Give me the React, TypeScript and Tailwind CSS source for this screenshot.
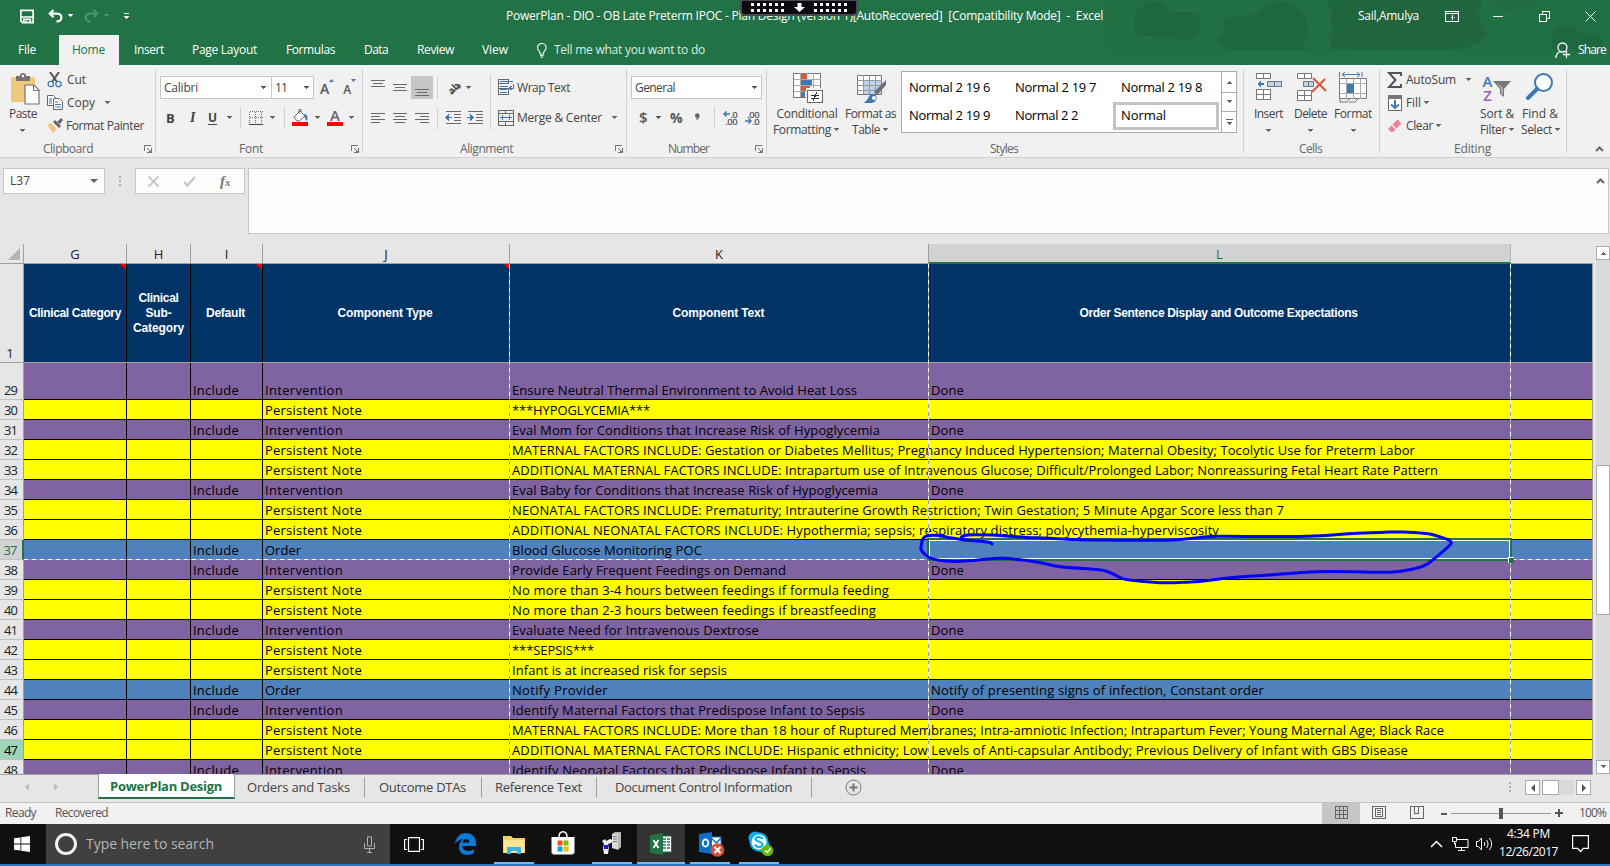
import { useLayoutEffect, useRef, useState } from "react";
import type { ReactNode } from "react";

/* Text set to an exact advance width through letter spacing. */
function Fit({ w, t, className = "" }: { w: number; t: string; className?: string }) {
  const ref = useRef<HTMLSpanElement>(null);
  const [ls, setLs] = useState(0);
  useLayoutEffect(() => {
    const el = ref.current;
    if (el) setLs((w - el.getBoundingClientRect().width) / t.length);
  }, [w, t]);
  return (
    <span className={"block shrink-0 whitespace-pre " + className} style={{ width: w, letterSpacing: ls }}>
      <span ref={ref}>{t}</span>
    </span>
  );
}

function Caret({ className = "" }: { className?: string }) {
  return (
    <svg className={"h-[4px] w-[7px] shrink-0 " + className} viewBox="0 0 7 4" fill="currentColor" shapeRendering="crispEdges">
      <path d="M1 0h5v1H1zM2 1h3v1H2zM3 2h1v1H3z" />
    </svg>
  );
}

function VLine({ className = "" }: { className?: string }) {
  return <span className={"block w-px shrink-0 bg-[#d0d0d0] " + className} />;
}

function Launcher({ className = "" }: { className?: string }) {
  return (
    <svg className={"h-[8px] w-[8px] shrink-0 " + className} viewBox="0 0 8 8" fill="none" stroke="#777" shapeRendering="crispEdges">
      <path d="M.5 6V.5H7M3 3l3 3M7.5 3v4.5H3M5 6.5h2" />
    </svg>
  );
}

function Group({ className, label, labelClass, w, launcher, children }: {
  className: string; label: string; labelClass: string; w: number; launcher?: string; children: ReactNode;
}) {
  return (
    <section className={"mt-1 flex h-[84px] shrink-0 flex-col border-r border-[#d0d0d0] " + className}>
      <div className="flex h-[75px]">{children}</div>
      <div className="flex h-[9px] items-center text-[#666]">
        <Fit w={w} t={label} className={labelClass} />
        {launcher && <Launcher className={launcher} />}
      </div>
    </section>
  );
}

function Lines({ rows, className = "" }: { rows: [number, number, number][]; className?: string }) {
  return (
    <svg className={"h-[16px] w-[16px] shrink-0 " + className} viewBox="0 0 16 16" fill="#6a6a6a" shapeRendering="crispEdges">
      {rows.map(([x, y, w]) => <rect key={y} x={x} y={y} width={w} height="1" />)}
    </svg>
  );
}

function TitleBar() {
  return (
    <div className="relative flex h-[32px] items-center">
      <svg className="ml-[20px] h-[15px] w-[14px] shrink-0" viewBox="0 0 15 15" fill="none" stroke="#fff" strokeWidth="1.8">
        <path d="M.9.9h13.200v13.200H2.8L.9 12.200zM.8 8h13.400" /><path d="M4 14V10.500h7V14" /><path d="M5.500 13h2" />
      </svg>
      <svg className="ml-[14px] h-[14px] w-[15px] shrink-0" viewBox="0 0 15 14" fill="none" stroke="#fff" strokeWidth="2.200">
        <path d="M5.500 1 1.800 4.600 5.500 8.200" /><path d="M2 4.600h7.200c5.600 0 5.600 7.800 0 7.800H8.500" />
      </svg>
      <Caret className="ml-[4px] text-white" />
      <svg className="ml-[10px] h-[14px] w-[15px] shrink-0" viewBox="0 0 15 14" fill="none" stroke="#4f9570" strokeWidth="2">
        <path d="M9.500 1l3.700 3.600-3.700 3.600" /><path d="M13 4.600H5.800c-5.600 0-5.600 7.800 0 7.800h.7" />
      </svg>
      <Caret className="ml-[4px] text-[#4f9570]" />
      <svg className="ml-[13px] h-[8px] w-[7px] shrink-0" viewBox="0 0 7 8" fill="#fff" shapeRendering="crispEdges">
        <path d="M1 1h5v1H1zM1 4h5v1H1zM2 5h3v1H2zM3 6h1v1H3z" />
      </svg>
      <Fit w={597} t="PowerPlan - DIO - OB Late Preterm IPOC - Plan Design (version 1)[AutoRecovered]  [Compatibility Mode]  -  Excel" className="ml-[376px]" />
      <Fit w={61} t="Sail,Amulya" className="ml-[255px]" />
      <svg className="ml-[26px] h-[11px] w-[14px] shrink-0" viewBox="0 0 14 11" fill="none" stroke="#fff" shapeRendering="crispEdges">
        <path d="M.5.500h13v10H.5zM.5 2.500h13M7.500 4v5M5.500 6.500h1M8.500 6.500h1" />
      </svg>
      <span className="ml-[34px] block h-px w-[10px] bg-white" />
      <svg className="ml-[36px] h-[11px] w-[11px] shrink-0" viewBox="0 0 11 11" fill="none" stroke="#fff" shapeRendering="crispEdges">
        <path d="M.5 3.500h7v7h-7zM3.500 3V.500h7v7H8" />
      </svg>
      <svg className="ml-[35px] h-[11px] w-[11px] shrink-0" viewBox="0 0 11 11" fill="none" stroke="#fff"><path d="M.5.500l10 10M10.500.500l-10 10" /></svg>
      <div className="absolute -top-px left-[740px] flex h-[17px] w-[118px] items-center justify-between rounded-b-[5px] border-2 border-[#4a4852] bg-[#0a0a10] px-[9px]">
        <Dots />
        <svg className="h-[9px] w-[11px]" viewBox="0 0 11 9" fill="#fff"><path d="M3.500 0h4v4H11L5.500 9 0 4h3.500z" /></svg>
        <Dots />
      </div>
    </div>
  );
}

function Dots() {
  return (
    <span className="grid grid-cols-6 gap-[3px]">
      {Array.from({ length: 12 }, (_, i) => <i key={i} className="block h-[3px] w-[3px] bg-white" />)}
    </span>
  );
}

function TabBar() {
  return (
    <div className="relative flex h-[33px] items-end">
      <div className="flex h-[30px] items-center">
        <Fit w={18} t="File" className="ml-[18px]" />
        <div className="ml-[23px] flex h-[30px] w-[60px] items-center bg-[#f1f1f1] pl-[13px] text-[#217346]"><Fit w={33} t="Home" /></div>
        <Fit w={30} t="Insert" className="ml-[15px]" />
        <Fit w={65} t="Page Layout" className="ml-[28px]" />
        <Fit w={49} t="Formulas" className="ml-[29px]" />
        <Fit w={24} t="Data" className="ml-[29px]" />
        <Fit w={37} t="Review" className="ml-[29px]" />
        <Fit w={26} t="View" className="ml-[28px]" />
        <svg className="ml-[28px] h-[15px] w-[12px] shrink-0" viewBox="0 0 12 15" fill="none" stroke="#e4f0e9" strokeWidth="1.200">
          <path d="M4 11V9.500C3.500 8 1.500 7 1.500 4.800a4.300 4.300 0 0 1 8.600 0C10.100 7 8.100 8 7.600 9.500V11zM4 12.500h3.600M4.500 14.200h2.600" />
        </svg>
        <Fit w={151} t="Tell me what you want to do" className="ml-[6px] text-[#dcebe3]" />
        <svg className="ml-[850px] h-[17px] w-[16px] shrink-0" viewBox="0 0 16 17" fill="none" stroke="#fff" strokeWidth="1.300">
          <circle cx="7.500" cy="5.500" r="4.500" /><path d="M1 16c0-3 1.500-5.500 4.500-6.500M8 12.500h7M11.500 9v7" />
        </svg>
        <Fit w={28} t="Share" className="ml-[7px]" />
      </div>
    </div>
  );
}

function ClipboardGroup() {
  return (
    <Group className="w-[156px]" label="Clipboard" w={50} labelClass="ml-[43px]" launcher="ml-[51px]">
      <div className="flex w-[47px] shrink-0 flex-col">
        <svg className="ml-[10px] mt-[4px] h-[32px] w-[30px]" viewBox="0 0 30 32">
          <path d="M1 6a2 2 0 0 1 2-2h20a2 2 0 0 1 2 2v23H1z" fill="#edc87e" />
          <path d="M6 3h4a3 3 0 0 1 6 0h4v5H6z" fill="#737373" /><circle cx="13" cy="3" r="1.200" fill="#fff" />
          <path d="M15 12h9l5 5v14H15z" fill="#fff" stroke="#737373" strokeWidth="1.200" /><path d="M23.500 12v5.500H29" fill="none" stroke="#737373" />
        </svg>
        <Fit w={28} t="Paste" className="ml-[9px] mt-px" />
        <Caret className="ml-[19px] mt-[7px] text-[#666]" />
      </div>
      <div className="-mt-px flex flex-col">
        <div className="flex h-[23px] items-center">
          <svg className="h-[16px] w-[16px]" viewBox="0 0 16 16" fill="none">
            <path d="M3 0l7 10M12 0L5 10" stroke="#555" strokeWidth="2" />
            <circle cx="3.800" cy="12" r="2.700" stroke="#3f78b3" strokeWidth="1.300" /><circle cx="11.500" cy="12" r="2.700" stroke="#3f78b3" strokeWidth="1.300" />
          </svg>
          <Fit w={19} t="Cut" className="ml-[4px]" />
        </div>
        <div className="flex h-[23px] items-center">
          <svg className="h-[15px] w-[16px]" viewBox="0 0 16 15" fill="#fff" stroke="#666">
            <path d="M.5.500h6l2 2v8h-8z" /><path d="M6.500 3.500h6l3 3v8h-9z" />
            <path d="M2 4h3M2 6h3M2 8h3M8 7h3M8 9.500h6M8 12h6" stroke="#3f78b3" />
          </svg>
          <Fit w={28} t="Copy" className="ml-[4px]" />
          <Caret className="ml-[9px] text-[#666]" />
        </div>
        <div className="flex h-[23px] items-center">
          <svg className="h-[15px] w-[16px]" viewBox="0 0 16 15">
            <path d="M0 7l4-2 6 6-4 4z" fill="#edc87e" /><path d="M6 4l2-2 6 6-2 2z" fill="#666" /><path d="M10 4l4-4 2 2-3 4z" fill="#666" />
          </svg>
          <Fit w={78} t="Format Painter" className="ml-[3px]" />
        </div>
      </div>
    </Group>
  );
}

function FontGroup() {
  return (
    <Group className="w-[207px]" label="Font" w={24} labelClass="ml-[83px]" launcher="ml-[88px]">
      <div className="flex flex-col pl-[4px] pt-[7px]">
        <div className="flex h-[23px] items-center">
          <div className="flex h-[23px] w-[112px] items-center border border-[#c6c6c6] bg-white pl-[3px]">
            <Fit w={34} t="Calibri" /><Caret className="ml-[62px] text-[#555]" />
          </div>
          <div className="-ml-px flex h-[23px] w-[43px] items-center border border-[#c6c6c6] bg-white pl-[3px]">
            <Fit w={12} t="11" /><Caret className="ml-[16px] text-[#555]" />
          </div>
          <span className="ml-[6px] mt-[2px] text-[14px] leading-none font-semibold text-[#555]">A</span>
          <svg className="-mt-[14px] h-[3px] w-[5px]" viewBox="0 0 5 3" fill="#3f78b3"><path d="M0 3L2.500 0 5 3z" /></svg>
          <span className="ml-[9px] mt-[4px] text-[12px] leading-none font-semibold text-[#555]">A</span>
          <svg className="-mt-[14px] h-[3px] w-[5px]" viewBox="0 0 5 3" fill="#3f78b3"><path d="M0 0h5L2.500 3z" /></svg>
        </div>
        <div className="mt-[7px] flex h-[23px] items-center text-[#444]">
          <b className="ml-[6px] w-[9px] text-[13px]">B</b>
          <i className="ml-[15px] w-[8px] font-['Liberation_Serif'] text-[14px] font-bold">I</i>
          <u className="ml-[10px] w-[11px] text-[12px] font-bold underline-offset-2">U</u>
          <Caret className="ml-[7px] text-[#666]" />
          <VLine className="ml-[7px] h-[22px]" />
          <svg className="ml-[8px] h-[14px] w-[14px]" viewBox="0 0 14 14" fill="none" stroke="#777" shapeRendering="crispEdges">
            <path d="M.5.500h13M.5 6.500h13M.5.500v12M6.500.500v12M12.500.500v12" strokeDasharray="1 1" /><path d="M0 13.500h14" stroke="#444" />
          </svg>
          <Caret className="ml-[6px] text-[#666]" />
          <VLine className="ml-[8px] h-[22px]" />
          <svg className="ml-[7px] h-[17px] w-[16px]" viewBox="0 0 16 17">
            <path d="M2 8l6-6 5 5-6 5H5z" fill="#fff" stroke="#666" /><path d="M7 5V0h2v3" fill="none" stroke="#666" />
            <path d="M12 5c4 0 4 4 3 7-2-1-2-4-3-7z" fill="#3f78b3" /><path d="M0 13h16v4H0z" fill="red" />
          </svg>
          <Caret className="ml-[6px] text-[#666]" />
          <span className="ml-[6px] flex w-[16px] flex-col items-center">
            <span className="text-[15px] leading-[13px] font-semibold text-[#666]">A</span><span className="h-[4px] w-[16px] bg-[#ff0000]" />
          </span>
          <Caret className="ml-[5px] text-[#666]" />
        </div>
      </div>
    </Group>
  );
}

function AlignmentGroup() {
  return (
    <Group className="w-[264px]" label="Alignment" w={53} labelClass="ml-[97px]" launcher="ml-[102px]">
      <div className="flex flex-col pt-[7px]">
        <div className="flex h-[23px] items-center">
          <Lines className="ml-[7px]" rows={[[1, 0, 14], [3, 3, 10], [1, 6, 14]]} />
          <Lines className="ml-[6px]" rows={[[1, 4, 14], [3, 7, 10], [1, 10, 14]]} />
          <span className="ml-[3px] flex h-[23px] w-[22px] items-center bg-[#c6c6c6] pl-[3px]"><Lines rows={[[1, 9, 14], [3, 12, 10], [1, 15, 14]]} /></span>
          <VLine className="ml-[4px] h-[22px]" />
          <span className="ml-[7px] flex h-[16px] w-[16px] items-center justify-center">
            <span className="-rotate-45 text-[10px] leading-none font-bold text-[#555]">ab</span>
          </span>
          <svg className="-ml-[11px] mt-[3px] h-[11px] w-[11px]" viewBox="0 0 11 11" fill="none" stroke="#555" strokeWidth="1.300"><path d="M1 10L10 1M10 1H6.500M10 1v3.500" /></svg>
          <Caret className="ml-[4px] text-[#666]" />
        </div>
        <div className="mt-[8px] flex h-[23px] items-center">
          <Lines className="ml-[7px]" rows={[[1, 2, 14], [1, 5, 9], [1, 8, 14], [1, 11, 9]]} />
          <Lines className="ml-[6px]" rows={[[1, 2, 14], [3, 5, 10], [1, 8, 14], [3, 11, 10]]} />
          <Lines className="ml-[6px]" rows={[[1, 2, 14], [6, 5, 9], [1, 8, 14], [6, 11, 9]]} />
          <VLine className="ml-[7px] h-[22px]" />
          <Indent className="-mt-px ml-[7px]" />
          <Indent className="-mt-px ml-[6px]" right />
        </div>
      </div>
      <VLine className="ml-[7px] mt-[6px] h-[55px]" />
      <div className="flex flex-col pl-[7px] pt-[7px]">
        <div className="flex h-[23px] items-center">
          <svg className="-mt-[2px] h-[16px] w-[17px]" viewBox="0 0 17 16" fill="none" shapeRendering="crispEdges">
            <path d="M.5.500h10v4H.5zM.5 9.500h10v6H.5zM.5 4v6" stroke="#666" />
            <path d="M2 2.500h13M2 7.500h8M2 10.500h7M2 13.500h7" stroke="#3f78b3" />
            <path d="M15.500 5v4h-4M13.500 7l-2 2 2 2" stroke="#3f78b3" />
          </svg>
          <Fit w={53} t="Wrap Text" className="ml-[2px]" />
        </div>
        <div className="mt-[7px] flex h-[23px] items-center">
          <svg className="h-[16px] w-[16px]" viewBox="0 0 16 16" fill="none" shapeRendering="crispEdges">
            <path d="M.5.500h15v15H.5zM.5 3.500h15M.5 11.500h15M7.500 0v3M7.500 12v3" stroke="#666" />
            <path d="M2 7.500h12M4.500 5v5M11.500 5v5" stroke="#3f78b3" />
          </svg>
          <Fit w={85} t="Merge & Center" className="ml-[3px]" />
          <Caret className="ml-[9px] text-[#666]" />
        </div>
      </div>
    </Group>
  );
}

function Indent({ right = false, className = "" }: { right?: boolean; className?: string }) {
  return (
    <svg className={"h-[14px] w-[16px] shrink-0 " + className} viewBox="0 0 16 14" fill="none" shapeRendering="crispEdges">
      <path d="M1 .500h15M9 3.500h7M9 6.500h7M9 9.500h7M1 12.500h15" stroke="#6a6a6a" />
      {right ? <path d="M0 6h3V3l4 3.500L3 10V7H0z" fill="#3f78b3" /> : <path d="M7 6H4V3L0 6.500 4 10V7h3z" fill="#3f78b3" />}
    </svg>
  );
}

function Decimal({ top, bottom, right = false }: { top: string; bottom: string; right?: boolean }) {
  const arrow = (
    <svg className="h-[6px] w-[7px]" viewBox="0 0 7 6" fill="none" stroke="#3f78b3" strokeWidth="1.500">
      {right ? <path d="M0 3h6M3.500.5L6 3 3.500 5.500" /> : <path d="M7 3H1M3.500.5L1 3l2.500 2.500" />}
    </svg>
  );
  return (
    <span className="flex w-[15px] flex-col items-end text-[9.5px] leading-[7px] font-semibold tracking-[-0.6px]">
      <span className="flex h-[7px] items-center">{!right && arrow}{top}</span>
      <span className="flex h-[7px] items-center">{right && arrow}{bottom}</span>
    </span>
  );
}

function NumberGroup() {
  return (
    <Group className="w-[140px]" label="Number" w={41} labelClass="ml-[41px]" launcher="ml-[46px]">
      <div className="flex flex-col pl-[4px] pt-[7px]">
        <div className="flex h-[23px] w-[131px] items-center border border-[#c6c6c6] bg-white pl-[3px]">
          <Fit w={40} t="General" /><Caret className="ml-[76px] text-[#555]" />
        </div>
        <div className="mt-[7px] flex h-[23px] items-center text-[#555]">
          <span className="ml-[8px] w-[9px] text-[15px] leading-none font-semibold">$</span>
          <Caret className="ml-[7px]" />
          <span className="ml-[8px] w-[14px] text-[14px] leading-none font-bold">%</span>
          <svg className="-mt-[2px] ml-[10px] h-[8px] w-[7px]" viewBox="0 0 7 8" fill="#666"><path d="M1 2.500a2.300 2.300 0 0 1 4.600 0C5.600 5 4 7 1 7.600c1.200-.8 1.900-1.700 2-2.700C1.800 4.800 1 3.800 1 2.500z" /></svg>
          <VLine className="ml-[13px] h-[22px]" />
          <span className="ml-[7px] flex gap-[7px]"><Decimal top=".0" bottom=".00" /><Decimal top=".00" bottom=".0" right /></span>
        </div>
      </div>
    </Group>
  );
}

function StylesGroup() {
  return (
    <Group className="w-[477px]" label="Styles" w={28} labelClass="ml-[223px]">
      <div className="flex w-[72px] shrink-0 flex-col items-center">
        <svg className="ml-[10px] mt-[4px] h-[31px] w-[31px]" viewBox="0 0 31 31" shapeRendering="crispEdges">
          <path d="M.5.500h27v24H.5z" fill="#fff" stroke="#777" />
          <path d="M.5 6.500h27M.5 12.500h27M.5 18.500h27M7.500 0v24M13.500 0v24M20.500 0v24" stroke="#a9a9a9" />
          <path d="M8 1h6v5H8zM8 13h9v5H8z" fill="#d8593b" /><path d="M8 7h11v5H8zM8 19h4v5H8z" fill="#3f78b3" />
          <path d="M13 15h18v16H13z" fill="#f1f1f1" /><path d="M14.500 17.500h15v12h-15z" fill="#fff" stroke="#666" />
          <path d="M18 22.500h8M18 25.500h8M24 19l-4 9" stroke="#333" />
        </svg>
        <Fit w={61} t="Conditional" className="ml-[8px] mt-[2px]" />
        <div className="ml-[7px] flex items-center"><Fit w={58} t="Formatting" /><Caret className="ml-[2px] text-[#666]" /></div>
      </div>
      <div className="ml-[6px] flex w-[51px] shrink-0 flex-col items-center">
        <svg className="ml-[3px] mt-[6px] h-[29px] w-[30px]" viewBox="0 0 30 29">
          <path d="M.5.500h24v19H.5z" fill="#fff" stroke="#777" /><path d="M7 6h17v13H7z" fill="#bcd2ea" />
          <path d="M.5 5.500h24M.5 10.500h24M.5 15.500h24M6.500 0v19M12.500 0v19M18.500 0v19" stroke="#999" fill="none" />
          <path d="M29 5v5l-9 10-3-3z" fill="#6f6f6f" /><path d="M6 28c5-1 5-9 10-9s5 8-1 9z" fill="#3f78b3" /><circle cx="17" cy="23" r="2" fill="#fff" />
        </svg>
        <Fit w={51} t="Format as" className="mt-[2px]" />
        <div className="flex items-center"><Fit w={28} t="Table" /><Caret className="ml-[2px] text-[#666]" /></div>
      </div>
      <div className="ml-[5px] mt-[2px] flex h-[62px] w-[336px] border border-[#ababab] bg-white text-[13px] text-black">
        <div className="flex w-[319px] flex-col pt-px">
          <div className="flex h-[28px] items-center pl-[7px]">
            <Fit w={81} t="Normal 2 19 6" /><Fit w={81} t="Normal 2 19 7" className="ml-[25px]" /><Fit w={81} t="Normal 2 19 8" className="ml-[25px]" />
          </div>
          <div className="flex h-[28px] items-center pl-[7px]">
            <Fit w={81} t="Normal 2 19 9" /><Fit w={63} t="Normal 2 2" className="ml-[25px]" />
            <div className="ml-[35px] mt-[2px] flex h-[28px] w-[106px] items-center border-[3px] border-[#c3c3c3] pl-[5px]"><Fit w={45} t="Normal" className="-mt-[3px]" /></div>
          </div>
        </div>
        <div className="flex w-[15px] flex-col border-l border-[#ababab] text-[#666]">
          <span className="flex h-[20px] items-center justify-center"><Caret className="rotate-180" /></span>
          <span className="flex h-[20px] items-center justify-center border-y border-[#ababab]"><Caret /></span>
          <span className="flex h-[20px] flex-col items-center justify-center gap-[2px]"><span className="h-px w-[7px] bg-[#666]" /><Caret /></span>
        </div>
      </div>
    </Group>
  );
}

function CellsGroup() {
  return (
    <Group className="w-[136px]" label="Cells" w={23} labelClass="ml-[55px]">
      <div className="ml-[10px] flex w-[30px] shrink-0 flex-col">
        <svg className="ml-[2px] mt-[4px] h-[28px] w-[27px]" viewBox="0 0 27 28" fill="#fff" stroke="#777" shapeRendering="crispEdges">
          <path d="M.5.500h14v5H.5zM7.500 0v5M.5 16.500h14v10H.5zM7.500 16v10M.5 21.500h14" /><path d="M11.500 8.500h14v5h-14zM18.500 8v5" fill="#bcd2ea" />
          <path d="M8 10H5V7l-4 4 4 4v-3h3z" fill="#3f78b3" stroke="none" />
        </svg>
        <Fit w={29} t="Insert" className="mt-[5px]" /><Caret className="ml-[11px] mt-[7px] text-[#666]" />
      </div>
      <div className="ml-[10px] flex w-[34px] shrink-0 flex-col">
        <svg className="ml-[3px] mt-[4px] h-[28px] w-[30px]" viewBox="0 0 30 28" fill="#fff" stroke="#777">
          <path d="M.5.500h14v5H.5zM7.500 0v5M.5 17.500h14v10H.5zM7.500 17v10M.5 22.500h14" /><path d="M6.500 8.500h10v5h-10zM11.500 8v5" fill="#bcd2ea" />
          <path d="M16 5l13 13M28 6L15 19" stroke="#d8593b" strokeWidth="2.200" />
        </svg>
        <Fit w={33} t="Delete" className="mt-[5px]" /><Caret className="ml-[13px] mt-[7px] text-[#666]" />
      </div>
      <div className="ml-[6px] flex w-[38px] shrink-0 flex-col">
        <svg className="ml-[5px] mt-[3px] h-[31px] w-[29px]" viewBox="0 0 29 31" fill="#fff" stroke="#777">
          <path d="M.5 0v5M23 0v5M3 2.500h18M6 0L3 2.500 6 5M18 0l3 2.500L18 5" stroke="#3f78b3" fill="none" />
          <path d="M.5 6.500h27v20H.5z" /><path d="M.5 11.500h27M.5 21.500h27M7.500 7v20M14.500 7v20M21.500 7v20" stroke="#aaa" /><path d="M8 12h7v9H8z" fill="#3f78b3" stroke="none" />
          <path d="M1 27v3h7l2-3M10 30h6l3-3" fill="none" />
        </svg>
        <Fit w={38} t="Format" className="mt-[3px]" /><Caret className="ml-[16px] mt-[7px] text-[#666]" />
      </div>
    </Group>
  );
}

function EditingGroup() {
  return (
    <Group className="w-[187px]" label="Editing" w={37} labelClass="ml-[74px]">
      <div className="-mt-px ml-[7px] flex w-[94px] shrink-0 flex-col">
        <div className="flex h-[23px] items-center">
          <svg className="h-[16px] w-[15px]" viewBox="0 0 15 16" fill="none" stroke="#555" strokeWidth="2"><path d="M14 4V1H2l6.500 7L2 15h12v-3" /></svg>
          <Fit w={50} t="AutoSum" className="ml-[4px]" /><Caret className="ml-[9px] text-[#666]" />
        </div>
        <div className="flex h-[23px] items-center">
          <svg className="ml-px h-[16px] w-[14px]" viewBox="0 0 14 16"><path d="M.5.500h13v15H.5z" fill="#fff" stroke="#666" /><path d="M0 0h14v4H0z" fill="#777" /><path d="M7 5v8M3 9.500L7 13l4-3.500" fill="none" stroke="#3f78b3" strokeWidth="2" /></svg>
          <Fit w={15} t="Fill" className="ml-[4px]" /><Caret className="ml-[2px] text-[#666]" />
        </div>
        <div className="flex h-[23px] items-center">
          <svg className="ml-px h-[14px] w-[14px]" viewBox="0 0 14 14"><path d="M4.500 5.500l5-5 4 4-5 5z" fill="#e98497" /><path d="M3.500 6.500l4 4-2.500 2.500H3L0 10z" fill="#e98497" /></svg>
          <Fit w={27} t="Clear" className="ml-[4px]" /><Caret className="ml-[2px] text-[#666]" />
        </div>
      </div>
      <div className="-ml-px flex w-[37px] shrink-0 flex-col">
        <div className="ml-[2px] mt-[5px] flex h-[28px] w-[32px]">
          <div className="flex w-[11px] flex-col items-center text-[15px] leading-[14px] font-semibold">
            <span className="text-[#3f78b3]">A</span><span className="text-[#9a5bb9]">Z</span>
          </div>
          <svg className="mt-[7px] h-[17px] w-[18px]" viewBox="0 0 18 17"><path d="M0 0h18l-7 8v8l-4-3V8z" fill="#777" /><path d="M3.500 1.500l5 6v5.500l1 .800V7z" fill="#ddd" /></svg>
        </div>
        <Fit w={34} t="Sort &" className="mt-[4px]" />
        <div className="flex items-center"><Fit w={26} t="Filter" /><Caret className="ml-[2px] text-[#666]" /></div>
      </div>
      <div className="ml-[4px] flex w-[40px] shrink-0 flex-col">
        <svg className="ml-[5px] mt-[4px] h-[29px] w-[29px]" viewBox="0 0 29 29" fill="none" stroke="#3f78b3"><circle cx="17.500" cy="9.500" r="8.500" fill="#fff" strokeWidth="2" /><path d="M11 16L2 25" strokeWidth="4" strokeLinecap="round" /></svg>
        <Fit w={36} t="Find &" className="ml-px mt-[4px]" />
        <div className="flex items-center"><Fit w={31} t="Select" /><Caret className="ml-[2px] text-[#666]" /></div>
      </div>
    </Group>
  );
}

function Chevron({ className = "" }: { className?: string }) {
  return <svg className={"h-[6px] w-[9px] shrink-0 " + className} viewBox="0 0 9 6" fill="none" stroke="#666" strokeWidth="2"><path d="M1 5l3.500-3.500L8 5" /></svg>;
}

function Ribbon() {
  return (
    <div className="flex h-[93px] border-b border-[#d0d0d0] bg-[#f1f1f1] text-[#444]">
      <ClipboardGroup /><FontGroup /><AlignmentGroup /><NumberGroup /><StylesGroup /><CellsGroup /><EditingGroup />
      <Chevron className="ml-[28px] mt-[81px]" />
    </div>
  );
}

function FormulaBar() {
  return (
    <div className="flex h-[86px] items-start pt-[10px] text-[#444]">
      <div className="ml-[3px] flex h-[26px] w-[102px] items-center border border-[#c6c6c6] bg-[#fdfdfd] pl-[6px]">
        <Fit w={20} t="L37" />
        <svg className="ml-[60px] h-[4px] w-[8px]" viewBox="0 0 8 4" fill="#666"><path d="M0 0h8L4 4z" /></svg>
      </div>
      <span className="ml-[14px] mt-[8px] flex flex-col gap-[2px]">{[0, 1, 2].map((i) => <i key={i} className="block h-[2px] w-[2px] bg-[#b0b0b0]" />)}</span>
      <div className="ml-[14px] flex h-[26px] w-[110px] items-center border border-[#c6c6c6] bg-[#fdfdfd]">
        <svg className="ml-[12px] h-[11px] w-[11px]" viewBox="0 0 11 11" stroke="#c4c4c4" strokeWidth="1.800"><path d="M.5.500l10 10M10.500.500l-10 10" /></svg>
        <svg className="ml-[24px] h-[11px] w-[13px]" viewBox="0 0 13 11" fill="none" stroke="#c8c8c8" strokeWidth="2.400"><path d="M1 6l3.500 3.500L12 1" /></svg>
        <span className="ml-[24px] font-['Liberation_Serif'] text-[15px] leading-none font-bold text-[#777] italic">f<span className="text-[11px]">x</span></span>
      </div>
      <div className="ml-[3px] flex h-[66px] w-[1361px] justify-end border border-[#c6c6c6] bg-[#fdfdfd] pr-[3px] pt-[9px]"><Chevron className="h-[5px] w-[8px]" /></div>
    </div>
  );
}

type Kind = "int" | "note" | "order";
const rows: { n: number; k: Kind; t: string; w: number; l?: string; lw?: number }[] = [
  { n: 29, k: "int", t: "Ensure Neutral Thermal Environment to Avoid Heat Loss", w: 345, l: "Done", lw: 33 },
  { n: 30, k: "note", t: "***HYPOGLYCEMIA***", w: 138 },
  { n: 31, k: "int", t: "Eval Mom for Conditions that Increase Risk of Hypoglycemia", w: 368, l: "Done", lw: 33 },
  { n: 32, k: "note", t: "MATERNAL FACTORS INCLUDE: Gestation or Diabetes Mellitus; Pregnancy Induced Hypertension; Maternal Obesity; Tocolytic Use for Preterm Labor", w: 903 },
  { n: 33, k: "note", t: "ADDITIONAL MATERNAL FACTORS INCLUDE: Intrapartum use of Intravenous Glucose; Difficult/Prolonged Labor; Nonreassuring Fetal Heart Rate Pattern", w: 926 },
  { n: 34, k: "int", t: "Eval Baby for Conditions that Increase Risk of Hypoglycemia", w: 366, l: "Done", lw: 33 },
  { n: 35, k: "note", t: "NEONATAL FACTORS INCLUDE: Prematurity; Intrauterine Growth Restriction; Twin Gestation; 5 Minute Apgar Score less than 7", w: 772 },
  { n: 36, k: "note", t: "ADDITIONAL NEONATAL FACTORS INCLUDE: Hypothermia; sepsis; respiratory distress; polycythemia-hyperviscosity", w: 707 },
  { n: 37, k: "order", t: "Blood Glucose Monitoring POC", w: 190 },
  { n: 38, k: "int", t: "Provide Early Frequent Feedings on Demand", w: 274, l: "Done", lw: 33 },
  { n: 39, k: "note", t: "No more than 3-4 hours between feedings if formula feeding", w: 377 },
  { n: 40, k: "note", t: "No more than 2-3 hours between feedings if breastfeeding", w: 364 },
  { n: 41, k: "int", t: "Evaluate Need for Intravenous Dextrose", w: 247, l: "Done", lw: 33 },
  { n: 42, k: "note", t: "***SEPSIS***", w: 82 },
  { n: 43, k: "note", t: "Infant is at increased risk for sepsis", w: 215 },
  { n: 44, k: "order", t: "Notify Provider", w: 96, l: "Notify of presenting signs of infection, Constant order", lw: 333 },
  { n: 45, k: "int", t: "Identify Maternal Factors that Predispose Infant to Sepsis", w: 353, l: "Done", lw: 33 },
  { n: 46, k: "note", t: "MATERNAL FACTORS INCLUDE: More than 18 hour of Ruptured Membranes; Intra-amniotic Infection; Intrapartum Fever; Young Maternal Age; Black Race", w: 932 },
  { n: 47, k: "note", t: "ADDITIONAL MATERNAL FACTORS INCLUDE: Hispanic ethnicity; Low Levels of Anti-capsular Antibody; Previous Delivery of Infant with GBS Disease", w: 896 },
  { n: 48, k: "int", t: "Identify Neonatal Factors that Predispose Infant to Sepsis", w: 354, l: "Done", lw: 33 },
];
const rowBg: Record<Kind, string> = { int: "bg-[#8064a2]", note: "bg-[#ffff00]", order: "bg-[#4f81bd]" };
const typeText: Record<Kind, [string, number]> = { int: ["Intervention", 78], note: ["Persistent Note", 97], order: ["Order", 36] };

function ColumnHeads() {
  const heads: [string, string][] = [["G", "w-[103px]"], ["H", "w-[64px]"], ["I", "w-[72px]"], ["J", "w-[247px]"], ["K", "w-[419px]"], ["L", "w-[582px]"]];
  return (
    <div className="flex h-[20px] text-[13px] text-[#222]">
      <div className="flex w-[24px] items-end justify-end border-r border-b border-[#9f9f9f] pr-[3px] pb-[3px]">
        <svg className="h-[12px] w-[12px]" viewBox="0 0 12 12" fill="#b2b2b2"><path d="M12 0v12H0z" /></svg>
      </div>
      {heads.map(([h, w]) => (
        <div key={h} className={"flex items-center justify-center border-r border-b " + w + (h === "L" ? " border-r-[#b5b5b5] border-b-2 border-b-[#217346] bg-[#d2d2d2] pt-px text-[#217346]" : " border-[#9f9f9f]")}>{h}</div>
      ))}
      <div className="w-[82px] border-b border-[#9f9f9f]" />
    </div>
  );
}

function Note() {
  return <svg className="absolute right-0 top-0 h-[6px] w-[6px]" viewBox="0 0 6 6" fill="red"><path d="M0 0h6v6z" /></svg>;
}

function Sheet() {
  const th = "relative flex flex-col items-center justify-center leading-[15px] ";
  return (
    <div className="relative h-[531px] w-[1593px] overflow-hidden">
      <ColumnHeads />
      <div className="flex h-[99px] border-b border-[#9f9f9f] bg-[#003366] font-['Liberation_Sans'] text-[12px] font-bold text-white">
        <div className="flex w-[24px] items-end justify-center border-r border-[#9f9f9f] bg-[#e6e6e6] pb-[1px] pr-[3px] font-['Open_Sans'] text-[13px] font-normal text-[#222]">1</div>
        <div className={th + "w-[103px] border-r border-black"}><Fit w={92} t="Clinical Category" /><Note /></div>
        <div className={th + "w-[64px] border-r border-black"}><Fit w={40} t="Clinical" /><Fit w={26} t="Sub-" /><Fit w={51} t="Category" /></div>
        <div className={th + "w-[72px] border-r border-black pr-[2px]"}><Fit w={39} t="Default" /><Note /></div>
        <div className={th + "w-[247px] pr-[3px]"}><Fit w={95} t="Component Type" /><Note /></div>
        <div className={th + "w-[419px] pr-[2px]"}><Fit w={92} t="Component Text" /></div>
        <div className={th + "w-[582px] pr-[3px]"}><Fit w={278} t="Order Sentence Display and Outcome Expectations" /></div>
      </div>
      {rows.map((r) => (
        <div key={r.n} className={"flex text-[13px] leading-[18px] text-black " + rowBg[r.k] + (r.n === 29 ? " h-[37px]" : " h-[20px]")}>
          <div className={"flex w-[24px] shrink-0 items-end justify-center border-b border-b-[#c0c0c0] pr-[2px] " + (r.n === 37 ? "border-r-2 border-r-[#217346] bg-[#d2d2d2] text-[#217346]" : r.n === 47 ? "border-r border-r-[#9f9f9f] bg-[#9fd5b7]" : "border-r border-r-[#9f9f9f] bg-[#e6e6e6] text-[#222]")}><Fit w={13} t={String(r.n)} /></div>
          <div className="w-[103px] shrink-0 border-r border-b border-black" />
          <div className="w-[64px] shrink-0 border-r border-b border-black" />
          <div className="flex w-[72px] shrink-0 items-end border-r border-b border-black pl-[2px]">{r.k !== "note" && <Fit w={46} t="Include" />}</div>
          <div className="flex w-[247px] shrink-0 items-end border-b border-black pl-[2px]"><Fit w={typeText[r.k][1]} t={typeText[r.k][0]} /></div>
          <div className="flex w-[419px] shrink-0 items-end border-b border-black pl-[2px]"><Fit w={r.w} t={r.t} /></div>
          <div className="flex w-[664px] shrink-0 items-end border-b border-black pl-[2px]">{r.l && <Fit w={r.lw ?? 0} t={r.l} />}</div>
        </div>
      ))}
      <div className="absolute left-[509px] top-[20px] h-[511px] w-px bg-[repeating-linear-gradient(180deg,#fff_0_4px,#9f9f9f_4px_8px)]" />
      <div className="absolute left-[928px] top-[20px] h-[511px] w-px bg-[repeating-linear-gradient(180deg,#fff_0_4px,#9f9f9f_4px_8px)]" />
      <div className="absolute left-[1510px] top-[20px] h-[511px] w-px bg-[repeating-linear-gradient(180deg,#fff_0_4px,#9f9f9f_4px_8px)]" />
      <div className="absolute left-[24px] top-[315px] h-px w-[1568px] bg-[repeating-linear-gradient(90deg,#fff_0_4px,#9f9f9f_4px_8px)]" />
      <div className="absolute left-[1592px] top-[20px] h-[511px] w-px bg-[#9f9f9f]" />
      <div className="absolute bottom-0 left-0 h-px w-full bg-[#9f9f9f]" />
      <div className="absolute left-[927px] top-[294px] h-[23px] w-[585px] border-2 border-[#217346]"><div className="h-full w-full border border-white" /></div>
      <div className="absolute left-[1508px] top-[313px] h-[6px] w-[6px] border-t border-l border-white bg-[#217346]" />
      <svg className="absolute left-[910px] top-[280px] h-[70px] w-[560px]" viewBox="910 524 560 70" fill="none" stroke="#0000ff" strokeWidth="3" strokeLinejoin="round" strokeLinecap="round">
        <path d="M992 544C990 541 985 542 966 540C960 538 959 536 968 535C995 534 1010 537 1036 537.700S1065 539.700 1081 539.700S1150 541 1172 540S1200 536.500 1217 536.300S1285 537 1308 536.300S1350 533 1371 532.700S1390 531.500 1403 532S1428 533 1434 535S1453 540 1451 543.500S1442 552 1434 559S1422 567 1412 569.300S1400 572 1389 572.300S1340 571 1317 571.700S1275 575 1249 576.300S1210 581 1190 582S1165 583.500 1154 582.300S1130 581 1122 578.300S1112 571 1099 569.700S1065 568 1054 565.700S1035 561 1022 560S1015 558 1000 558.300S980 560 968 560.700S955 562 945 561S930 559 927 556S920 552 921 546.700S922 537 927 536S938 535 945 536.700S957 538.500 966 540.300" />
      </svg>
    </div>
  );
}

function VScroll() {
  const btn = "flex h-[14px] items-center justify-center border border-[#ababab] bg-white text-[#666]";
  return (
    <div className="ml-[3px] flex h-[531px] w-[14px] flex-col pt-[2px]">
      <div className={btn}><Caret className="rotate-180" /></div>
      <div className="h-[205px] bg-[#dadada]" />
      <div className="h-[150px] border border-[#ababab] bg-white" />
      <div className="h-[145px] bg-[#dadada]" />
      <div className={btn}><Caret /></div>
    </div>
  );
}

function SheetTabs() {
  const sep = "block h-[20px] w-px bg-[#9f9f9f] ";
  return (
    <div className="relative flex h-[28px] items-center border-b border-[#c0c0c0] pb-[3px] text-[13px] text-[#444]">
      <svg className="ml-[25px] h-[8px] w-[4px]" viewBox="0 0 4 8" fill="#bdbdbd"><path d="M4 0v8L0 4z" /></svg>
      <svg className="ml-[25px] h-[8px] w-[4px]" viewBox="0 0 4 8" fill="#bdbdbd"><path d="M0 0v8l4-4z" /></svg>
      <div className="ml-[40px] -mt-px flex h-[25px] w-[137px] items-center border-x border-b-2 border-x-[#9f9f9f] border-b-[#217346] bg-white pl-[11px] pt-px font-bold text-[#217346]"><Fit w={112} t="PowerPlan Design" /></div>
      <Fit w={103} t="Orders and Tasks" className="ml-[12px]" /><span className={sep + "ml-[14px]"} />
      <Fit w={87} t="Outcome DTAs" className="ml-[14px]" /><span className={sep + "ml-[15px]"} />
      <Fit w={87} t="Reference Text" className="ml-[13px]" /><span className={sep + "ml-[14px]"} />
      <Fit w={177} t="Document Control Information" className="ml-[18px]" /><span className={sep + "ml-[19px]"} />
      <svg className="ml-[33px] h-[17px] w-[17px]" viewBox="0 0 17 17" fill="none" stroke="#777"><circle cx="8.500" cy="8.500" r="7.500" /><path d="M8.500 4.500v8M4.500 8.500h8" strokeWidth="2" /></svg>
      <span className="ml-[647px] flex flex-col gap-[2px]">{[0, 1, 2].map((i) => <i key={i} className="block h-[2px] w-[2px] bg-[#b0b0b0]" />)}</span>
      <span className="ml-[14px] mt-px flex h-[15px] w-[15px] items-center justify-center border border-[#ababab] bg-white"><svg className="h-[8px] w-[4px]" viewBox="0 0 4 8" fill="#555"><path d="M4 0v8L0 4z" /></svg></span>
      <span className="ml-[2px] mt-px h-[15px] w-[17px] border border-[#ababab] bg-white" /><span className="mt-px h-[15px] w-[15px] bg-[#dadada]" />
      <span className="ml-[2px] mt-px flex h-[15px] w-[15px] items-center justify-center border border-[#ababab] bg-white"><svg className="h-[8px] w-[4px]" viewBox="0 0 4 8" fill="#555"><path d="M0 0v8l4-4z" /></svg></span>
    </div>
  );
}

function StatusBar() {
  return (
    <div className="flex h-[21px] items-center bg-[#f1f1f1] text-[#555]">
      <Fit w={31} t="Ready" className="-mt-px ml-[5px]" /><Fit w={53} t="Recovered" className="-mt-px ml-[19px]" />
      <span className="ml-[1214px] flex h-[21px] w-[38px] items-center justify-center bg-[#c6c6c6]">
        <svg className="-mt-[2px] h-[13px] w-[13px]" viewBox="0 0 13 13" fill="none" stroke="#666" shapeRendering="crispEdges"><path d="M.5.500h12v12H.5zM.5 4.500h12M.5 8.500h12M4.500 0v12M8.500 0v12" /></svg>
      </span>
      <svg className="-mt-[2px] ml-[12px] h-[13px] w-[14px]" viewBox="0 0 14 13" fill="none" stroke="#666" shapeRendering="crispEdges"><path d="M.5.500h13v12H.5zM3.500 2.500h7v8h-7zM5 4.500h4M5 6.500h4M5 8.500h4" /></svg>
      <svg className="-mt-[2px] ml-[24px] h-[13px] w-[14px]" viewBox="0 0 14 13" fill="none" stroke="#666" shapeRendering="crispEdges"><path d="M.5.500h13v12H.5zM4.500 0v7h4V0" /></svg>
      <span className="ml-[17px] h-[2px] w-[6px] bg-[#555]" />
      <span className="-mt-px ml-[4px] flex h-[12px] w-[100px] items-center justify-center bg-[linear-gradient(#999,#999)] bg-[length:100%_1px] bg-center bg-no-repeat"><span className="h-[11px] w-[4px] bg-[#555]" /></span>
      <svg className="-mt-px ml-[4px] h-[8px] w-[8px]" viewBox="0 0 8 8" stroke="#555" strokeWidth="2"><path d="M4 0v8M0 4h8" /></svg>
      <Fit w={27} t="100%" className="-mt-[2px] ml-[16px]" />
    </div>
  );
}

function TaskIcon({ on = false, line = true, className, children }: { on?: boolean; line?: boolean; className: string; children: ReactNode }) {
  return (
    <div className={"flex h-[40px] shrink-0 flex-col items-center " + (on ? "bg-[#333] " : "") + className}>
      <div className="flex h-[38px] items-center">{children}</div>
      {line && <div className="h-[2px] w-full bg-[#76b9ed]" />}
    </div>
  );
}

function Taskbar() {
  return (
    <div className="flex h-[42px] border-b-2 border-[#1a7ad0] bg-[#101010] text-white">
      <div className="flex w-[46px] shrink-0 items-center pl-[14px]">
        <svg className="h-[16px] w-[16px]" viewBox="0 0 16 16" fill="#fff"><path d="M0 2.300L6.500 1.400v6.200H0zM7.300 1.300L16 0v7.600H7.300zM0 8.400h6.500v6.200L0 13.700zM7.300 8.400H16V16l-8.700-1.300z" /></svg>
      </div>
      <div className="flex w-[344px] shrink-0 items-center bg-[#404040] pl-[9px]">
        <span className="block h-[22px] w-[22px] rounded-full border-[3px] border-[#f2f2f2]" />
        <Fit w={128} t="Type here to search" className="ml-[9px] text-[14px] text-[#b4b4b4]" />
        <svg className="ml-[150px] h-[17px] w-[11px]" viewBox="0 0 11 17" fill="none" stroke="#b0b0b0"><path d="M3.500 1h4v9h-4zM.5 7v5.500h10V7M5.500 12.500v4M3 16.500h5" /></svg>
      </div>
      <TaskIcon line={false} className="w-[48px]">
        <svg className="mt-[2px] h-[15px] w-[20px]" viewBox="0 0 20 15" fill="none" stroke="#fff" strokeWidth="1.200"><path d="M4.500.600h11v13.800h-11zM3 2.500H.6v10H3M17 2.500h2.400v10H17" /></svg>
      </TaskIcon>
      <TaskIcon line={false} className="ml-[3px] w-[48px]">
        <svg className="mt-[2px] h-[22px] w-[21px]" viewBox="0 0 21 22"><path d="M0 11C1 4 5 0 11 0c6 0 10 4.500 10 10v3H7.500c0 5 6 6.500 11.500 3.500V20c-7 4-15 1.500-15-6 0-4 2-6.500 4.500-8C5 6.500 2 8 0 11zm7.500-1.500H14.500C14.500 5 8 5 7.500 9.500z" fill="#0a7ad9" /></svg>
      </TaskIcon>
      <TaskIcon className="ml-[5px] w-[40px]">
        <svg className="mt-[2px] h-[19px] w-[22px]" viewBox="0 0 22 19"><path d="M0 1h8l2 2h12v15H0z" fill="#f5cf60" /><path d="M1 5h20v13H1z" fill="#fbe694" /><path d="M4 19v-7h14v7h-4v-3H8v3z" fill="#3bb2e6" /></svg>
      </TaskIcon>
      <TaskIcon line={false} className="ml-[5px] w-[48px]">
        <svg className="h-[24px] w-[24px]" viewBox="0 0 24 24"><path d="M8 6c0-7 8-7 8 0" fill="none" stroke="#fff" strokeWidth="1.500" /><path d="M.5 6h23v16l-2 1.500h-19L.5 22z" fill="#fff" /><path d="M6.500 9.500h5v5h-5z" fill="#f25022" /><path d="M12.500 9.500h5v5h-5z" fill="#7fba00" /><path d="M6.500 15.500h5v5h-5z" fill="#00a4ef" /><path d="M12.500 15.500h5v5h-5z" fill="#ffb900" /></svg>
      </TaskIcon>
      <TaskIcon className="ml-[5px] w-[40px]">
        <svg className="h-[23px] w-[20px]" viewBox="0 0 20 23"><path d="M10 2l3-2h6v15l-3 3-6-2z" fill="#b8b8b8" /><path d="M10 2h6v15l-6-1z" fill="#d9d9d9" /><path d="M11 4.500h4M11 7h4M11 9.500h4" stroke="#777" /><path d="M0 9l3-2 1 2 4-2 3 1-2 3-3 1 1 3-1 7H2l-1-6 1-4z" fill="#f0f0f0" /><path d="M2 13h5l-1 4H2z" fill="#1a1ad0" /></svg>
      </TaskIcon>
      <TaskIcon on className="ml-[5px] w-[48px]">
        <svg className="mt-[2px] h-[22px] w-[22px]" viewBox="0 0 22 22"><path d="M11 3h10.500v16H11z" fill="#fff" stroke="#217346" /><path d="M13 6h3M17 6h3M13 9h3M17 9h3M13 12h3M17 12h3M13 15h3M17 15h3" stroke="#217346" strokeWidth="1.500" /><path d="M0 2l13-2v22L0 20z" fill="#217346" /><path d="M3.500 7l5 8M8.500 7l-5 8" stroke="#fff" strokeWidth="1.800" /></svg>
      </TaskIcon>
      <TaskIcon className="ml-[5px] w-[40px]">
        <svg className="ml-[3px] mt-[3px] h-[25px] w-[26px]" viewBox="0 0 26 25"><path d="M12 5h10v11H12z" fill="#fff" stroke="#1272c4" /><path d="M12 6l5.500 5L22 6" fill="none" stroke="#1272c4" strokeWidth="1.500" /><path d="M0 2l13-2v22L0 20z" fill="#0f6fc5" /><ellipse cx="6.500" cy="11" rx="2.800" ry="3.600" fill="none" stroke="#fff" strokeWidth="1.800" /><circle cx="18.500" cy="18" r="6.800" fill="#d8503a" /><path d="M15.500 15l6 6M21.500 15l-6 6" stroke="#fff" strokeWidth="2" /></svg>
      </TaskIcon>
      <TaskIcon className="ml-[9px] w-[40px]">
        <svg className="ml-[3px] mt-[2px] h-[26px] w-[26px]" viewBox="0 0 26 26"><circle cx="7" cy="7" r="6.500" fill="#00aff0" /><circle cx="15" cy="15" r="6.500" fill="#00aff0" /><circle cx="11" cy="11" r="9.500" fill="#00aff0" /><circle cx="11" cy="11" r="7.500" fill="#fff" /><path d="M14.500 8c-1-2.800-7-2.800-7 0s7 2.500 7 5.500-6 3.500-7.500 0" fill="none" stroke="#00aff0" strokeWidth="2" /><circle cx="19.500" cy="19.500" r="5.800" fill="#6bb700" /><path d="M17 19.500l2 2 3.500-4" fill="none" stroke="#fff" strokeWidth="1.500" /></svg>
      </TaskIcon>
      <div className="ml-[651px] flex items-center">
        <svg className="h-[8px] w-[13px]" viewBox="0 0 13 8" fill="none" stroke="#fff" strokeWidth="1.500"><path d="M1 7l5.500-5.500L12 7" /></svg>
        <svg className="ml-[9px] h-[14px] w-[17px]" viewBox="0 0 17 14" fill="none" stroke="#fff"><path d="M5 2.500h11v8H3.500V6M9.500 10v3M6 13.500h7M.5.500h4v4h-4zM2.500 4.500v3" /></svg>
        <svg className="ml-[7px] h-[14px] w-[17px]" viewBox="0 0 17 14" fill="none" stroke="#fff"><path d="M.5 4.500h2l3-3.500v12l-3-3.500h-2zM8 5c1 1 1 3 0 4M10.500 3c2 2 2 6 0 8M13 1c3.500 3 3.500 9 0 12" /></svg>
        <div className="ml-[6px] flex flex-col items-center"><Fit w={43} t="4:34 PM" className="-mt-px h-[18px]" /><Fit w={59} t="12/26/2017" className="h-[17px]" /></div>
        <svg className="ml-[14px] h-[18px] w-[17px]" viewBox="0 0 17 18" fill="none" stroke="#fff" strokeWidth="1.200"><path d="M.6.600h15.800v12.800h-5L8.500 16.500 5.600 13.400h-5z" /></svg>
      </div>
    </div>
  );
}

export default function App() {
  return (
    <div className="flex h-[866px] w-[1610px] flex-col overflow-hidden bg-[#e6e6e6] font-['Open_Sans',sans-serif] text-[12px] leading-4">
      <header className="relative h-[65px] bg-[#217346] text-white">
        <svg className="absolute inset-0 h-[65px] w-[1610px]" viewBox="0 0 1610 65" fill="#1f653d">
          <path d="M1110 0h500v51h-500z" opacity=".18" />
          <path d="M1134 18c2-12 12-16 22-16 8 0 12 5 16 11 10-2 22-2 28 4 2 8-2 16-6 22-16 2-36-2-50-4-4 0-8 2-10 2 2-5 0-12 0-19z" opacity=".75" />
          <path d="M1224 22c4-6 26-6 34-9 4-8 12-12 22-11 18 0 28 12 28 26 0 8-2 14-6 18l6 5h-72c-8-1-16-6-18-12 8-2 4-10 6-17z" opacity=".85" />
          <path d="M1328 0h152l2 8-6 4 6 4-4 5 5 4-1 4 6 3-4 5-6 6-12 5c-20 3-54 1-70 2-20 0-44 0-66-2l2-9-4-5 6-6-4-8 2-8-4-6z" />
          <path d="M1490 0h50l-14 8-20 4-8-6z" opacity=".5" />
          <path d="M1551 40c0-10 10-15 18-14 7 1 8 6 12 8 10 0 18 1 22 4v11h-50z" opacity=".75" />
        </svg>
        <TitleBar />
        <TabBar />
      </header>
      <Ribbon />
      <FormulaBar />
      <div className="flex h-[531px]"><Sheet /><VScroll /></div>
      <SheetTabs />
      <StatusBar />
      <Taskbar />
    </div>
  );
}
